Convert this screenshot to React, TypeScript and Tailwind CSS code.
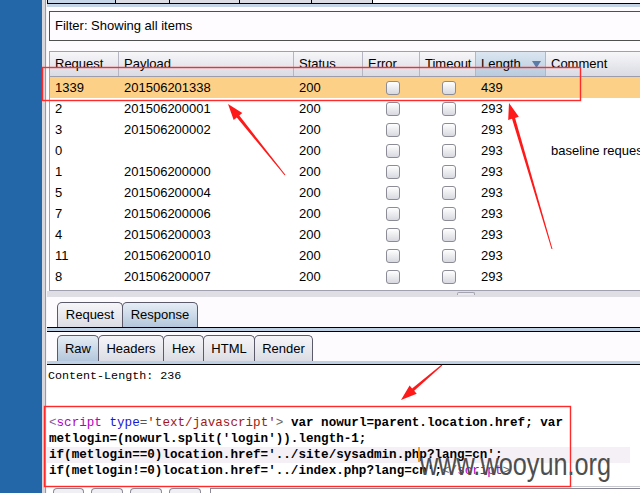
import React from "react";

type Row = { req: string; payload: string; len: string; comment?: string; selected?: boolean };

const rows: Row[] = [
  { req: "1339", payload: "201506201338", len: "439", selected: true },
  { req: "2", payload: "201506200001", len: "293" },
  { req: "3", payload: "201506200002", len: "293" },
  { req: "0", payload: "", len: "293", comment: "baseline request" },
  { req: "1", payload: "201506200000", len: "293" },
  { req: "5", payload: "201506200004", len: "293" },
  { req: "7", payload: "201506200006", len: "293" },
  { req: "4", payload: "201506200003", len: "293" },
  { req: "11", payload: "201506200010", len: "293" },
  { req: "8", payload: "201506200007", len: "293" },
];

const cols = "grid grid-cols-[69px_175px_69px_57px_56px_70px_1fr]";

function Check() {
  return (
    <span className="block h-[14px] w-[14px] rounded-[3px] border border-[#8c8c96] bg-linear-to-b from-white to-[#d8d9e0]" />
  );
}

function HeadCell({ children, sorted }: { children: React.ReactNode; sorted?: boolean }) {
  return (
    <div
      className={`flex items-center border-r border-[#b6b6c2] pl-[5px] ${
        sorted
          ? "justify-between bg-linear-to-b from-[#dbe6f1] to-[#b9cbde] pr-[4px]"
          : "bg-linear-to-b from-[#f7f7fa] to-[#dadbe3]"
      }`}
    >
      {children}
    </div>
  );
}

function Tab({ label, w, active, first }: { label: string; w: string; active?: boolean; first?: boolean }) {
  return (
    <div
      className={`flex h-full items-center justify-center rounded-t-[5px] border border-b-0 border-[#5a5a6a] ${w} ${
        first ? "" : "-ml-px"
      } ${active ? "bg-linear-to-b from-[#e6edf5] to-[#b3c7dc]" : "bg-linear-to-b from-[#f6f6f9] to-[#dcdde4]"}`}
    >
      {label}
    </div>
  );
}

// red annotation arrow, tapered shaft + filled head
function arrowPoints(tx: number, ty: number, px: number, py: number) {
  const dx = px - tx;
  const dy = py - ty;
  const L = Math.hypot(dx, dy);
  const ux = dx / L;
  const uy = dy / L;
  const nx = -uy;
  const ny = ux;
  const hl = 16;
  const hw = 5.5;
  const s0 = 0.5;
  const s1 = 1.6;
  const bx = px - ux * hl;
  const by = py - uy * hl;
  const pts = [
    [tx + nx * s0, ty + ny * s0],
    [bx + nx * s1, by + ny * s1],
    [bx + nx * hw, by + ny * hw],
    [px, py],
    [bx - nx * hw, by - ny * hw],
    [bx - nx * s1, by - ny * s1],
    [tx - nx * s0, ty - ny * s0],
  ];
  return pts.map((p) => `${p[0].toFixed(1)},${p[1].toFixed(1)}`).join(" ");
}

export default function App() {
  return (
    <div className="relative flex h-[493px] w-[640px] overflow-hidden bg-white font-['Liberation_Sans',Arial,sans-serif] text-[13px] text-black">
      {/* desktop strip */}
      <div className="w-[42px] shrink-0 bg-[#2467a8]" />
      <div className="flex w-[5px] shrink-0">
        <div className="w-[3px] bg-[#d6d6dc]" />
        <div className="w-px bg-[#9a9aa4]" />
        <div className="w-px bg-[#f4f4f6]" />
      </div>

      <div className="flex min-w-0 flex-1 flex-col bg-[#fdfbfe]">
        {/* top tabs (cut off) */}
        <div className="flex h-[3px] shrink-0">
          <div className="w-[69px] border-x border-black bg-[#c6d6e8]" />
          <div className="w-[54px] border-r border-black bg-[#dcdce4]" />
          <div className="w-[70px] border-r border-black bg-[#dcdce4]" />
          <div className="w-[72px] border-r border-black bg-[#dcdce4]" />
          <div className="w-[61px] border-r border-black bg-[#dcdce4]" />
        </div>
        <div className="h-px shrink-0 bg-black" />
        <div className="h-[3px] shrink-0 bg-[#c4d4e6]" />

        {/* filter */}
        <div className="ml-[2px] mt-[4px] flex h-[30px] w-[600px] shrink-0 items-center border border-[#505050] bg-[#fefcff] pl-[5px]">
          Filter: Showing all items
        </div>

        {/* results table */}
        <div className="ml-[2px] mt-[10px] h-[240px] w-[600px] shrink-0 border-y border-l border-[#a0a0b0] bg-white">
          <div className={`${cols} h-[25px] border-b border-[#9c9cac]`}>
            <HeadCell>Request</HeadCell>
            <HeadCell>Payload</HeadCell>
            <HeadCell>Status</HeadCell>
            <HeadCell>Error</HeadCell>
            <HeadCell>Timeout</HeadCell>
            <HeadCell sorted>
              <span>Length</span>
              <svg width="9" height="7" viewBox="0 0 9 7">
                <path d="M0 0 L9 0 L4.5 7 Z" fill="#5a7aa8" />
              </svg>
            </HeadCell>
            <HeadCell>Comment</HeadCell>
          </div>
          {rows.map((r) => (
            <div key={r.req} className={`${cols} h-[21px] items-center ${r.selected ? "bg-[#fdd088]" : ""}`}>
              <div className="pl-[5px]">{r.req}</div>
              <div className="pl-[5px]">{r.payload}</div>
              <div className="pl-[5px]">200</div>
              <div className="pl-[23px]">
                <Check />
              </div>
              <div className="pl-[22px]">
                <Check />
              </div>
              <div className="pl-[5px]">{r.len}</div>
              <div className="whitespace-nowrap pl-[5px]">{r.comment}</div>
            </div>
          ))}
        </div>

        {/* split divider */}
        <div className="flex h-[6px] shrink-0 items-start bg-[#dedee4] pl-[410px] pt-[1px]">
          <span className="block h-[3px] w-[18px] rounded-t-[2px] border border-b-0 border-[#a4a4b0] bg-[#e8e8ee]" />
        </div>

        {/* request / response tabs */}
        <div className="flex h-[30px] shrink-0 pl-[10px] pt-[5px]">
          <Tab label="Request" w="w-[66px]" first />
          <Tab label="Response" w="w-[76px]" active />
        </div>
        <div className="h-px shrink-0 bg-black" />
        <div className="h-[3px] shrink-0 bg-[#bdd0e4]" />
        <div className="h-px shrink-0 bg-black" />

        {/* raw / headers / hex ... */}
        <div className="flex h-[29px] shrink-0 pl-[10px] pt-[3px]">
          <Tab label="Raw" w="w-[42px]" active first />
          <Tab label="Headers" w="w-[66px]" />
          <Tab label="Hex" w="w-[41px]" />
          <Tab label="HTML" w="w-[52px]" />
          <Tab label="Render" w="w-[59px]" />
        </div>
        <div className="h-[3px] shrink-0 bg-[#bdd0e4]" />
        <div className="h-px shrink-0 bg-black" />

        {/* response body */}
        <div className="h-[121px] shrink-0 bg-white font-['Liberation_Mono',monospace]">
          <div className="pl-[1px] pt-[3px] text-[11.7px] leading-[16px]">Content-Length: 236</div>
          <div className="mt-[31px] whitespace-pre text-[12.6px] leading-[16px]">
            <div className="pl-[2px]">
              <span className="text-[#8a5a98]">&lt;</span>
              <span className="text-[#b000c0]">script</span> <span className="text-[#1818d0]">type</span>
              <span className="text-[#555]">=</span>
              <span className="text-[#a01818]">'text/javascript'</span>
              <span className="text-[#666]">&gt;</span>
              <span className="font-bold"> var nowurl=parent.location.href; var</span>
            </div>
            <div className="pl-[2px] font-bold">metlogin=(nowurl.split('login')).length-1;</div>
            <div className="w-[583px] bg-[#f5f0f5] pl-[2px] font-bold">
              if(metlogin==0)location.href='../site/sysadmin.ph
              <span className="-mx-px inline-block h-[15px] w-[2px] bg-[#f0a020] align-middle" />
              p?lang=cn';
            </div>
            <div className="pl-[2px]">
              <span className="font-bold">if(metlogin!=0)location.href='../index.php?lang=cn';</span>
              <span className="text-[#666]">&lt;/</span>
              <span className="text-[#b000c0]">script</span>
              <span className="text-[#666]">&gt;</span>
            </div>
          </div>
        </div>
        <div className="h-px shrink-0 bg-[#c8c8d0]" />

        {/* bottom buttons (cut off) */}
        <div className="flex h-[6px] shrink-0 items-start overflow-hidden bg-white pl-[6px] pt-[1px]">
          <span className="block h-[8px] w-[31px] rounded-t-[4px] border border-b-0 border-[#8a8a96] bg-[#f0f0f4]" />
          <span className="ml-[7px] block h-[8px] w-[32px] rounded-t-[4px] border border-b-0 border-[#8a8a96] bg-[#f0f0f4]" />
          <span className="ml-[7px] block h-[8px] w-[32px] rounded-t-[4px] border border-b-0 border-[#8a8a96] bg-[#f0f0f4]" />
          <span className="ml-[7px] block h-[8px] w-[32px] rounded-t-[4px] border border-b-0 border-[#8a8a96] bg-[#f0f0f4]" />
          <span className="ml-[9px] block h-[8px] flex-1 border-l border-t border-[#8a8a96]" />
        </div>
      </div>

      {/* annotations */}
      <svg className="pointer-events-none absolute left-0 top-0" width="640" height="493" viewBox="0 0 640 493">
        <rect x="42.5" y="67.5" width="538" height="33" fill="none" stroke="#ff2a2a" strokeWidth="1.4" />
        <rect x="44.5" y="406.5" width="526" height="80" fill="none" stroke="#ff2a2a" strokeWidth="1.4" />
        <polygon points={arrowPoints(285, 175, 228, 104)} fill="#ff1a1a" />
        <polygon points={arrowPoints(552, 249, 509, 103)} fill="#ff1a1a" />
        <polygon points={arrowPoints(442, 365, 401, 400)} fill="#ff1a1a" />
      </svg>

      <div className="pointer-events-none absolute left-[420px] top-[448px] origin-left scale-x-[0.79] whitespace-nowrap font-['Liberation_Sans',Arial,sans-serif] text-[32px] leading-[32px] text-[#4e4e4e]">
        www.wooyun.org
      </div>
    </div>
  );
}
